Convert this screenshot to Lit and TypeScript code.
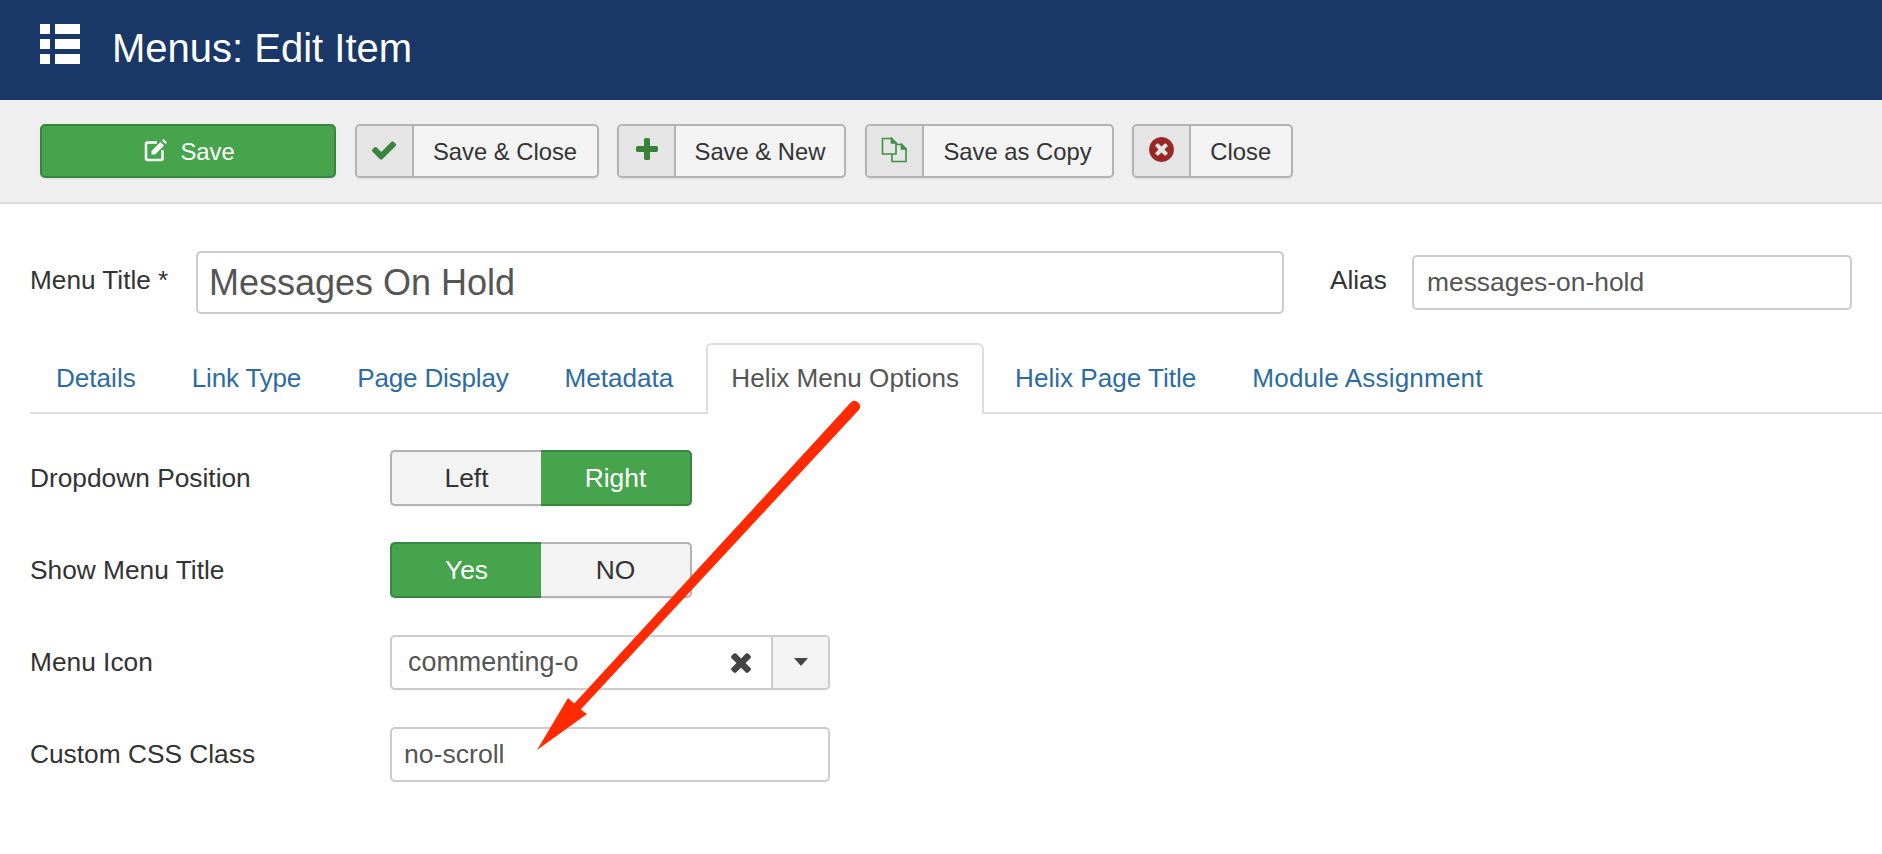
import { LitElement, html, css, svg } from "lit";
import { customElement } from "lit/decorators.js";

const P = {
  check: "M1671 566q0 40-28 68l-724 724-136 136q-28 28-68 28t-68-28l-136-136-362-362q-28-28-28-68t28-68l136-136q28-28 68-28t68 28l294 295 656-657q28-28 68-28t68 28l136 136q28 28 28 68z",
  plus: "M1600 736v192q0 40-28 68t-68 28h-416v416q0 40-28 68t-68 28h-192q-40 0-68-28t-28-68v-416h-416q-40 0-68-28t-28-68v-192q0-40 28-68t68-28h416v-416q0-40 28-68t68-28h192q40 0 68 28t28 68v416h416q40 0 68 28t28 68z",
  times: "M1490 1322q0 40-28 68l-136 136q-28 28-68 28t-68-28l-294-294-294 294q-28 28-68 28t-68-28l-136-136q-28-28-28-68t28-68l294-294-294-294q-28-28-28-68t28-68l136-136q28-28 68-28t68 28l294 294 294-294q28-28 68-28t68 28l136 136q28 28 28 68t-28 68l-294 294 294 294q28 28 28 68z",
  timesCircle: "M1277 1122q0-26-19-45l-181-181 181-181q19-19 19-45 0-27-19-46l-90-90q-19-19-46-19-26 0-45 19l-181 181-181-181q-19-19-45-19-27 0-46 19l-90 90q-19 19-19 46 0 26 19 45l181 181-181 181q-19 19-19 45 0 27 19 46l90 90q19 19 46 19 26 0 45-19l181-181 181 181q19 19 45 19 27 0 46-19l90-90q19-19 19-46zm387-226q0 209-103 385.5t-279.5 279.5-385.5 103-385.5-103-279.5-279.5-103-385.5 103-385.5 279.5-279.5 385.5-103 385.5 103 279.5 279.5 103 385.5z",
};

const fa = (d: string, size: number, color: string) => html`<svg width=${size} height=${size} viewBox="0 0 1792 1792" fill=${color}>${svg`<path d=${d}></path>`}</svg>`;

const editIcon = html`<svg width="24" height="24" viewBox="0 0 24 24">
  <path d="M13 4.500H3.500A1.500 1.500 0 0 0 2 6V20.500A1.500 1.500 0 0 0 3.500 22H17A1.500 1.500 0 0 0 18.500 20.500V12" fill="none" stroke="#fff" stroke-width="2.500"></path>
  <path d="M7.500 13L16.500 4L20 7.500L11 16.500H7.500Z" fill="#fff"></path>
  <path d="M18 2.500L19.500 1L23 4.500L21.500 6Z" fill="#fff"></path>
</svg>`;

const copyIcon = html`<svg width="26" height="26" viewBox="0 0 26 26" fill="none" stroke="#3f9046" stroke-width="1.6">
  <path d="M1.500 1.500H10.500L15 6V17H1.500Z"></path>
  <path d="M15 7.500H20.500L25 12V24.500H11V17"></path>
  <path d="M10.500 1.500V6H15Z" fill="#3f9046"></path>
  <path d="M20.500 7.500V12H25Z" fill="#3f9046"></path>
</svg>`;

@customElement("app-root")
export class AppRoot extends LitElement {
  static styles = css`
    :host { display: block; position: relative; height: 854px; overflow: hidden; background: #fff; color: #333; font-family: "Liberation Sans", Arial, sans-serif; font-size: 26.4px; }
    .header { height: 100px; background: #1a3867; display: flex; align-items: center; padding-left: 40px; box-sizing: border-box; }
    .logo { display: grid; grid-template-columns: 10px 25px; grid-template-rows: repeat(3, 10px); gap: 5px; margin-top: -12px; }
    .logo i { background: #fff; }
    .title { color: #fff; font-size: 40px; margin-left: 32px; margin-top: -4px; }
    .toolbar { height: 104px; box-sizing: border-box; background: #efefef; border-bottom: 2px solid #ddd; padding: 24px 0 0 40px; display: flex; gap: 18.5px; align-items: flex-start; font-size: 23.8px; }
    .btn { height: 54px; box-sizing: border-box; border: 2px solid #b3b3b3; border-radius: 5px; background: #f3f3f3; display: flex; align-items: center; box-shadow: 0 1px 2px rgba(0,0,0,.06); }
    .btn .ic { width: 55px; height: 100%; background: #e5e5e5; border-right: 2px solid #b3b3b3; display: flex; align-items: center; justify-content: center; border-radius: 3px 0 0 3px; box-sizing: content-box; flex: none; }
    .btn .ic svg { margin-top: -3px; }
    .btn .tx { flex: 1; text-align: center; padding-top: 2px; white-space: nowrap; }
    .w1 { width: 244px; }
    .w2 { width: 229px; }
    .w3 { width: 249px; }
    .w4 { width: 160.500px; }
    .save { width: 296px; background: #46a44c; border-color: #3a8540; color: #fff; justify-content: center; gap: 12px; padding-left: 3px; }
    .save span { padding-top: 2px; }
    .save svg { margin-top: -2px; }
    .title-row { display: flex; align-items: center; padding: 47px 30px 0; }
    .t-label { width: 166px; flex: none; margin-top: -5px; font-size: 26.2px; }
    .a-label { margin: -5px 26px 0 46px; width: 56px; flex: none; font-size: 26.2px; }
    .field { box-sizing: border-box; border: 2px solid #ccc; border-radius: 5px; background: #fff; color: #555; display: flex; align-items: center; font-size: 26.6px; }
    .big { flex: 1; height: 63px; font-size: 36px; padding-left: 11px; }
    .alias { width: 440px; height: 55px; padding-left: 13px; font-size: 26.4px; }
    .tabs { display: flex; gap: 6px; margin: 29px 0 0 30px; padding-left: 1px; border-bottom: 2px solid #ddd; height: 69px; font-size: 26.1px; }
    .tab { box-sizing: border-box; height: 71px; padding: 0 23px 3px; display: flex; align-items: center; color: #2d6ca2; border: 2px solid transparent; border-bottom: 0; white-space: nowrap; }
    .tab:nth-child(2), .tab:nth-child(3) { letter-spacing: -0.2px; }
    .tab:nth-child(7) { letter-spacing: 0.15px; }
    .tab.active { background: #fff; color: #555; border-color: #ddd; border-radius: 6px 6px 0 0; margin-left: 2px; }
    .form { padding: 36px 0 0 30px; display: flex; flex-direction: column; gap: 36px; }
    .row { display: flex; align-items: center; height: 56px; }
    .row .lbl { width: 360px; flex: none; padding-top: 1px; font-size: 26.3px; }
    .toggle { display: flex; width: 302px; height: 56px; box-sizing: border-box; }
    .toggle div { flex: 1; display: flex; align-items: center; justify-content: center; box-sizing: border-box; border: 2px solid #b3b3b3; background: #f3f3f3; box-shadow: 0 1px 2px rgba(0,0,0,.06); }
    .toggle div:first-child { border-radius: 5px 0 0 5px; border-right: 0; }
    .toggle div:last-child { border-radius: 0 5px 5px 0; border-left: 0; }
    .toggle div.on { background: #46a44c; border-color: #3a8540; color: #fff; }
    .select, .plain { width: 440px; height: 55px; }
    .select { box-shadow: 0 1px 2px rgba(0,0,0,.06); }
    .select .val { flex: 1; padding-left: 16px; font-size: 26.9px; }
    .select .x { margin-right: 15px; display: flex; }
    .select .arrow { width: 55px; height: 100%; border-left: 2px solid #ccc; background: #f3f3f3; display: flex; align-items: center; justify-content: center; border-radius: 0 3px 3px 0; }
    .caret { width: 0; height: 0; border: 7.5px solid transparent; border-top: 8px solid #444; border-bottom: 0; }
    .plain { padding-left: 12px; }
    .overlay { position: absolute; left: 0; top: 0; pointer-events: none; }
  `;

  private bar(icon: unknown, label: string, cls: string) {
    return html`<div class="btn ${cls}"><div class="ic">${icon}</div><div class="tx">${label}</div></div>`;
  }

  render() {
    return html`
      <div class="header">
        <div class="logo"><i></i><i></i><i></i><i></i><i></i><i></i></div>
        <div class="title">Menus: Edit Item</div>
      </div>
      <div class="toolbar">
        <div class="btn save">${editIcon}<span>Save</span></div>
        ${this.bar(fa(P.check, 28, "#3a8540"), "Save & Close", "w1")}
        ${this.bar(fa(P.plus, 28, "#378238"), "Save & New", "w2")}
        ${this.bar(copyIcon, "Save as Copy", "w3")}
        ${this.bar(fa(P.timesCircle, 29, "#982825"), "Close", "w4")}
      </div>
      <div class="title-row">
        <div class="t-label">Menu Title *</div>
        <div class="field big">Messages On Hold</div>
        <div class="a-label">Alias</div>
        <div class="field alias">messages-on-hold</div>
      </div>
      <div class="tabs">
        ${["Details", "Link Type", "Page Display", "Metadata", "Helix Menu Options", "Helix Page Title", "Module Assignment"].map(
          (t) => html`<div class="tab ${t === "Helix Menu Options" ? "active" : ""}">${t}</div>`
        )}
      </div>
      <div class="form">
        <div class="row"><div class="lbl">Dropdown Position</div>
          <div class="toggle"><div>Left</div><div class="on">Right</div></div></div>
        <div class="row"><div class="lbl">Show Menu Title</div>
          <div class="toggle"><div class="on">Yes</div><div>NO</div></div></div>
        <div class="row"><div class="lbl">Menu Icon</div>
          <div class="field select"><div class="val">commenting-o</div>
            <div class="x">${fa(P.times, 30, "#444")}</div>
            <div class="arrow"><div class="caret"></div></div></div></div>
        <div class="row"><div class="lbl">Custom CSS Class</div>
          <div class="field plain">no-scroll</div></div>
      </div>
      <svg class="overlay" width="1882" height="854" viewBox="0 0 1882 854">
        <path d="M851 402.300A5.500 5.500 0 0 1 859 409.700L580.700 709.400L587 714L537 750L568 698L574.300 703.600Z" fill="#ff2a00"></path>
      </svg>
    `;
  }
}
